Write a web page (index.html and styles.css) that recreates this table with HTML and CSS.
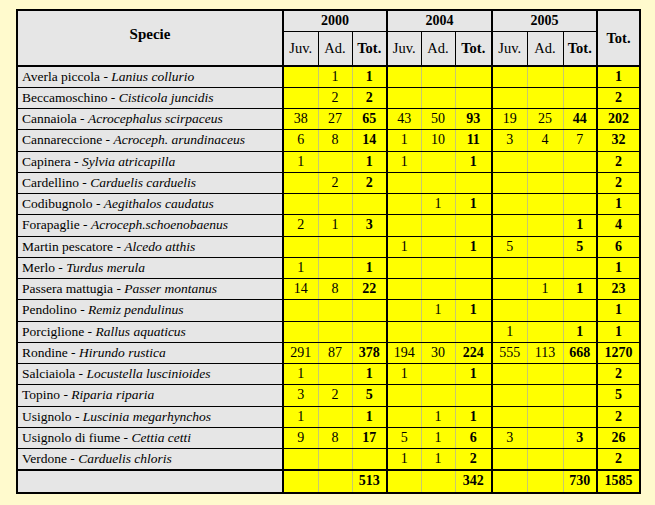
FILE: index.html
```html
<!DOCTYPE html>
<html>
<head>
<meta charset="utf-8">
<link rel="stylesheet" href="styles.css">
</head>
<body>
<table class="birds">
<colgroup>
<col class="c-sp">
<col class="c35"><col class="c34"><col class="c35">
<col class="c34"><col class="c34"><col class="c37">
<col class="c35"><col class="c36"><col class="c34">
<col class="c43">
</colgroup>
<thead>
<tr class="h1">
<th rowspan="2" class="hsp">Specie</th>
<th colspan="3" class="g">2000</th>
<th colspan="3" class="g">2004</th>
<th colspan="3" class="g">2005</th>
<th rowspan="2" class="g htot">Tot.</th>
</tr>
<tr class="h2">
<th class="g">Juv.</th><th>Ad.</th><th class="b">Tot.</th>
<th class="g">Juv.</th><th>Ad.</th><th class="b">Tot.</th>
<th class="g">Juv.</th><th>Ad.</th><th class="b">Tot.</th>
</tr>
</thead>
<tbody>
<tr><td class="sp">Averla piccola - <i>Lanius collurio</i></td><td class="g"></td><td>1</td><td class="b">1</td><td class="g"></td><td></td><td></td><td class="g"></td><td></td><td></td><td class="g b">1</td></tr>
<tr><td class="sp">Beccamoschino - <i>Cisticola juncidis</i></td><td class="g"></td><td>2</td><td class="b">2</td><td class="g"></td><td></td><td></td><td class="g"></td><td></td><td></td><td class="g b">2</td></tr>
<tr><td class="sp">Cannaiola - <i>Acrocephalus scirpaceus</i></td><td class="g">38</td><td>27</td><td class="b">65</td><td class="g">43</td><td>50</td><td class="b">93</td><td class="g">19</td><td>25</td><td class="b">44</td><td class="g b">202</td></tr>
<tr><td class="sp">Cannareccione - <i>Acroceph. arundinaceus</i></td><td class="g">6</td><td>8</td><td class="b">14</td><td class="g">1</td><td>10</td><td class="b">11</td><td class="g">3</td><td>4</td><td>7</td><td class="g b">32</td></tr>
<tr><td class="sp">Capinera - <i>Sylvia atricapilla</i></td><td class="g">1</td><td></td><td class="b">1</td><td class="g">1</td><td></td><td class="b">1</td><td class="g"></td><td></td><td></td><td class="g b">2</td></tr>
<tr><td class="sp">Cardellino - <i>Carduelis carduelis</i></td><td class="g"></td><td>2</td><td class="b">2</td><td class="g"></td><td></td><td></td><td class="g"></td><td></td><td></td><td class="g b">2</td></tr>
<tr><td class="sp">Codibugnolo - <i>Aegithalos caudatus</i></td><td class="g"></td><td></td><td></td><td class="g"></td><td>1</td><td class="b">1</td><td class="g"></td><td></td><td></td><td class="g b">1</td></tr>
<tr><td class="sp">Forapaglie - <i>Acroceph.schoenobaenus</i></td><td class="g">2</td><td>1</td><td class="b">3</td><td class="g"></td><td></td><td></td><td class="g"></td><td></td><td class="b">1</td><td class="g b">4</td></tr>
<tr><td class="sp">Martin pescatore - <i>Alcedo atthis</i></td><td class="g"></td><td></td><td></td><td class="g">1</td><td></td><td class="b">1</td><td class="g">5</td><td></td><td class="b">5</td><td class="g b">6</td></tr>
<tr><td class="sp">Merlo - <i>Turdus merula</i></td><td class="g">1</td><td></td><td class="b">1</td><td class="g"></td><td></td><td></td><td class="g"></td><td></td><td></td><td class="g b">1</td></tr>
<tr><td class="sp">Passera mattugia - <i>Passer montanus</i></td><td class="g">14</td><td>8</td><td class="b">22</td><td class="g"></td><td></td><td></td><td class="g"></td><td>1</td><td class="b">1</td><td class="g b">23</td></tr>
<tr><td class="sp">Pendolino - <i>Remiz pendulinus</i></td><td class="g"></td><td></td><td></td><td class="g"></td><td>1</td><td class="b">1</td><td class="g"></td><td></td><td></td><td class="g b">1</td></tr>
<tr><td class="sp">Porciglione - <i>Rallus aquaticus</i></td><td class="g"></td><td></td><td></td><td class="g"></td><td></td><td></td><td class="g">1</td><td></td><td class="b">1</td><td class="g b">1</td></tr>
<tr><td class="sp">Rondine - <i>Hirundo rustica</i></td><td class="g">291</td><td>87</td><td class="b">378</td><td class="g">194</td><td>30</td><td class="b">224</td><td class="g">555</td><td>113</td><td class="b">668</td><td class="g b">1270</td></tr>
<tr><td class="sp">Salciaiola - <i>Locustella luscinioides</i></td><td class="g">1</td><td></td><td class="b">1</td><td class="g">1</td><td></td><td class="b">1</td><td class="g"></td><td></td><td></td><td class="g b">2</td></tr>
<tr><td class="sp">Topino - <i>Riparia riparia</i></td><td class="g">3</td><td>2</td><td class="b">5</td><td class="g"></td><td></td><td></td><td class="g"></td><td></td><td></td><td class="g b">5</td></tr>
<tr><td class="sp">Usignolo - <i>Luscinia megarhynchos</i></td><td class="g">1</td><td></td><td class="b">1</td><td class="g"></td><td>1</td><td class="b">1</td><td class="g"></td><td></td><td></td><td class="g b">2</td></tr>
<tr><td class="sp">Usignolo di fiume - <i>Cettia cetti</i></td><td class="g">9</td><td>8</td><td class="b">17</td><td class="g">5</td><td>1</td><td class="b">6</td><td class="g">3</td><td></td><td class="b">3</td><td class="g b">26</td></tr>
<tr><td class="sp">Verdone - <i>Carduelis chloris</i></td><td class="g"></td><td></td><td></td><td class="g">1</td><td>1</td><td class="b">2</td><td class="g"></td><td></td><td></td><td class="g b">2</td></tr>
<tr class="total"><td class="sp"></td><td class="g"></td><td></td><td class="b">513</td><td class="g"></td><td></td><td class="b">342</td><td class="g"></td><td></td><td class="b">730</td><td class="g b">1585</td></tr>
</tbody>
</table>
</body>
</html>
```
FILE: styles.css
```css
html, body {
  margin: 0;
  background: #fffacd;
}
body {
  padding: 9px 0 0 16px;
}
.birds {
  border-collapse: collapse;
  table-layout: fixed;
  width: 623px;
  border: 2px solid #000;
  font-family: "Liberation Serif", "Times New Roman", serif;
  font-size: 14px;
  color: #000;
}
.c-sp { width: 266px; }
.c34 { width: 34px; }
.c35 { width: 35px; }
.c36 { width: 36px; }
.c37 { width: 37px; }
.c43 { width: 43px; }

.birds th {
  background: #e6e6e6;
  border: 1px solid #000;
  padding: 0;
  font-weight: normal;
  font-size: 14.5px;
  text-align: center;
}
.birds th.hsp,
.birds th.htot,
.birds .h1 th {
  font-weight: bold;
}
.birds .h1 th { font-size: 14px; }
.birds th.hsp { padding-bottom: 8px; font-size: 15px; }
.birds th.htot { font-size: 14.5px; }
.birds .h1 { height: 21px; }
.birds .h2 { height: 35px; }
.birds thead tr:last-child th,
.birds .hsp,
.birds .htot {
  border-bottom: 2px solid #000;
}
.birds tbody tr { height: 21.25px; }
.birds td {
  background: #ffff00;
  padding: 0;
  text-align: center;
  border-top: 1px solid #000;
  border-bottom: 1px solid #000;
  border-left: 1px solid #c8c870;
  border-right: 1px solid #c8c870;
  white-space: nowrap;
}
.birds td.sp {
  background: #e6e6e6;
  text-align: left;
  padding-left: 4px;
  font-size: 13.5px;
}
.birds .g { border-left: 2px solid #000; }
.birds th.g { border-left: 2px solid #000; }
.birds .b { font-weight: bold; }
.birds .total { height: 23px; }
.birds .total td { border-top: 2px solid #000; }
```
